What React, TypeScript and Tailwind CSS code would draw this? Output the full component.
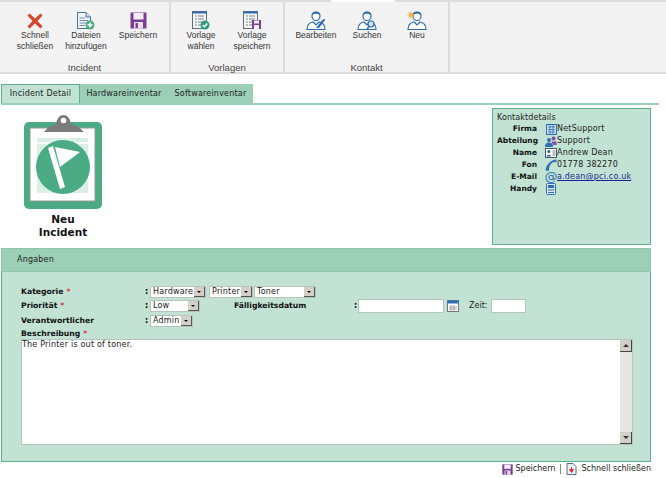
import React from 'react';

const verdana = "font-['DejaVu_Sans',sans-serif]";

function CloseIcon() {
  return (
    <svg width="16" height="16" viewBox="0 0 16 16">
      <path d="M2.500 .5 L8 5.500 L13.500 .5 L15.500 2.500 L10.500 8 L15.500 13.500 L13.500 15.500 L8 10.500 L2.500 15.500 L.5 13.500 L5.500 8 L.5 2.500 Z" fill="#d2492f" />
    </svg>
  );
}

function DocAddIcon() {
  return (
    <svg width="18" height="18" viewBox="0 0 18 18">
      <path d="M.5 .5H9L13.500 5V16.500H.5Z" fill="#f4f6f8" stroke="#48709c" />
      <path d="M9 .5V5H13.500" fill="#cfdcea" stroke="#48709c" />
      <path d="M2.500 6H8M2.500 8.500H11M2.500 11H9M2.500 13.500H8" stroke="#6c8fb5" />
      <circle cx="13" cy="13" r="4.500" fill="#4eaa85" />
      <path d="M13 10.500V15.500M10.500 13H15.500" stroke="#fff" strokeWidth="1.500" />
    </svg>
  );
}

function SaveIcon({ size = 17 }: { size?: number }) {
  return (
    <svg width={size} height={size} viewBox="0 0 17 17">
      <rect x=".5" y=".5" width="16" height="16" fill="#7c3f98" />
      <rect x="3.500" y="1" width="10" height="6.500" fill="#f3eef6" />
      <rect x="4" y="10" width="9" height="6.500" fill="#e9e0ee" />
      <rect x="5.500" y="11" width="2.500" height="5" fill="#7c3f98" />
    </svg>
  );
}

function TemplateIcon({ save }: { save?: boolean }) {
  return (
    <svg width="18" height="19" viewBox="0 0 18 19">
      <rect x=".5" y=".5" width="14" height="17" fill="#f5f6f7" stroke="#5d6b7a" />
      <rect x=".5" y=".5" width="14" height="2" fill="#2f6fb5" />
      <path d="M3 5H5M6 5H12M3 8H5M6 8H12M3 11H5M6 11H10M3 14H5M6 14H9" stroke="#7a8794" />
      {save ? (
        <g>
          <rect x="9" y="9" width="9" height="9" fill="#7c3f98" />
          <rect x="11" y="9.500" width="5" height="3" fill="#f3eef6" />
          <rect x="11" y="14" width="5" height="4" fill="#f3eef6" />
        </g>
      ) : (
        <g>
          <circle cx="13" cy="14" r="4.500" fill="#2f9e78" />
          <path d="M10.800 14L12.500 15.800L15.300 12.500" stroke="#fff" strokeWidth="1.400" fill="none" />
        </g>
      )}
    </svg>
  );
}

function PersonIcon({ variant }: { variant: 'edit' | 'search' | 'new' }) {
  return (
    <svg width="20" height="19" viewBox="0 0 20 19">
      <path d="M10 1C7.500 1 6 2.800 6 5C6 7.500 7.800 9.500 10 9.500C12.200 9.500 14 7.500 14 5C14 2.800 12.500 1 10 1Z" fill="#fff" stroke="#2b6cb0" strokeWidth="1.200" />
      <path d="M6 4.500C7 2.500 12 2 14 4.500C13.500 1.800 12 .8 10 .8C8 .8 6.500 1.800 6 4.500Z" fill="#2b6cb0" />
      <path d="M1 18.500C1 13.500 4 11.500 7 11L10 14L13 11C16 11.500 19 13.500 19 18.500Z" fill="#fff" stroke="#2b6cb0" strokeWidth="1.200" />
      {variant === 'edit' && <path d="M10 17L16 9.500L18.500 7.500L19 9L13 17Z" fill="#2b6cb0" />}
      {variant === 'search' && (
        <g>
          <circle cx="14" cy="13" r="3" fill="#cfe0f2" stroke="#2b6cb0" strokeWidth="1.200" />
          <path d="M12 15.500L10 18" stroke="#2b6cb0" strokeWidth="1.500" />
        </g>
      )}
      {variant === 'new' && (
        <g>
          <circle cx="4" cy="4" r="2.200" fill="#f0b44c" />
          <path d="M4 0V8M0 4H8M1.200 1.200L6.800 6.800M6.800 1.200L1.200 6.800" stroke="#f0b44c" strokeWidth=".8" />
        </g>
      )}
    </svg>
  );
}

function ToolButton({ icon, label, width }: { icon: React.ReactNode; label: React.ReactNode; width: string }) {
  return (
    <div className={`flex flex-col items-center ${width}`}>
      <div className="h-[19px] flex items-center justify-center">{icon}</div>
      <div className="text-center text-[8.500px] leading-[10.500px] text-[#333]">{label}</div>
    </div>
  );
}

function Group({ title, width, pad, children }: { title: string; width: string; pad: string; children: React.ReactNode }) {
  return (
    <div className={`${width} h-full flex flex-col border-r-2 border-[#dcdcdc]`}>
      <div className={`flex-1 flex items-start pt-[9px] ${pad}`}>{children}</div>
      <div className="h-[12px] text-center text-[9.500px] leading-[15px] text-[#444]">{title}</div>
    </div>
  );
}

function Select({ value, width }: { value: string; width: string }) {
  return (
    <div className={`${width} h-[12px] bg-white border border-[#b5c4bd] flex items-center justify-between pl-[2px] pr-0`}>
      <span className="text-[8px] leading-[10px] text-[#222] tracking-[0.2px]">{value}</span>
      <span className="w-[11px] h-[10px] bg-[#d4d0c8] border-r border-b border-[#555] flex items-center justify-center">
        <span className="w-0 h-0 border-l-[2px] border-r-[2px] border-t-[2px] border-l-transparent border-r-transparent border-t-black" />
      </span>
    </div>
  );
}

function FieldLabel({ text, required }: { text: string; required?: boolean }) {
  return (
    <div className="font-bold text-[7.700px] leading-[10px] text-[#111] whitespace-nowrap">
      {text}
      {required && <span className="text-[#d33] ml-[3px]">*</span>}
    </div>
  );
}

function ContactRow({ label, icon, children }: { label: string; icon: React.ReactNode; children: React.ReactNode }) {
  return (
    <div className="h-[12px] flex items-center">
      <span className="w-[40px] text-right font-bold text-[7.500px] leading-[10px] text-[#111]">{label}</span>
      <span className="w-[12px] h-[12px] ml-[8px] flex items-center justify-center shrink-0">{icon}</span>
      <span className="text-[8px] leading-[10px] text-[#222] tracking-[0.2px]">{children}</span>
    </div>
  );
}

function ScrollButton({ up }: { up?: boolean }) {
  return (
    <div className="w-[12px] h-[12px] bg-[#d4d0c8] border-r border-b border-[#444] flex items-center justify-center">
      {up ? (
        <span className="w-0 h-0 border-l-[3px] border-r-[3px] border-b-[3px] border-l-transparent border-r-transparent border-b-[#333]" />
      ) : (
        <span className="w-0 h-0 border-l-[3px] border-r-[3px] border-t-[3px] border-l-transparent border-r-transparent border-t-[#333]" />
      )}
    </div>
  );
}

function Clipboard() {
  return (
    <svg width="79" height="96" viewBox="0 0 79 96">
      <rect x="0" y="8" width="78" height="87" rx="5" fill="#4aab84" />
      <rect x="6" y="14" width="65" height="73" fill="#fff" stroke="#999" />
      <rect x="13" y="24" width="51" height="55" fill="#dcefe6" />
      <path d="M13 29H64" stroke="#fff" strokeWidth="1.500" />
      <circle cx="39" cy="53" r="27" fill="#4aab84" />
      <path d="M24 34L29 32L41 73L36 75Z" fill="#fff" />
      <path d="M31 33L56 38L36 53Z" fill="#fff" />
      <path d="M20 18L25 12.500L32 10C33 4 36 1 39.500 1C43 1 46 4 47 10L54 12.500L60 18Z" fill="#7b7b7b" />
      <circle cx="39.500" cy="6.500" r="2.800" fill="#fff" />
    </svg>
  );
}

export default function App() {
  return (
    <div className="w-[666px] h-[478px] bg-white overflow-hidden font-['Liberation_Sans',sans-serif]">
      <div className="h-[2px] flex">
        <div className="w-[331px] bg-[#dcdcdc]" />
        <div className="w-[64px] bg-white" />
        <div className="flex-1 bg-[#dcdcdc]" />
      </div>
      <div className="h-[72px] bg-[#f3f3f3] border-b-2 border-[#dcdcdc] flex">
        <Group title="Incident" width="w-[171px]" pad="pl-[11px]">
          <ToolButton width="w-[48px]" icon={<CloseIcon />} label={<>Schnell<br />schließen</>} />
          <ToolButton width="w-[54px]" icon={<DocAddIcon />} label={<>Dateien<br />hinzufügen</>} />
          <ToolButton width="w-[50px]" icon={<SaveIcon />} label="Speichern" />
        </Group>
        <Group title="Vorlagen" width="w-[114px]" pad="pl-[6px]">
          <ToolButton width="w-[48px]" icon={<TemplateIcon />} label={<>Vorlage<br />wählen</>} />
          <ToolButton width="w-[54px]" icon={<TemplateIcon save />} label={<>Vorlage<br />speichern</>} />
        </Group>
        <Group title="Kontakt" width="w-[165px]" pad="pl-[3px]">
          <ToolButton width="w-[56px]" icon={<PersonIcon variant="edit" />} label="Bearbeiten" />
          <ToolButton width="w-[46px]" icon={<PersonIcon variant="search" />} label="Suchen" />
          <ToolButton width="w-[54px]" icon={<PersonIcon variant="new" />} label="Neu" />
        </Group>
      </div>

      <div className={`mt-[10px] ml-[1px] w-[658px] h-[21px] flex border-b-2 border-[#9bcfb6] text-[8px] text-[#222] tracking-[0.2px] ${verdana}`}>
        <div className="w-[79px] h-[19px] bg-[#c2e3d4] border border-[#5bb08d] border-b-0 flex items-center justify-center">Incident Detail</div>
        <div className="w-[88px] h-[19px] bg-[#9bcfb6] flex items-center justify-center">Hardwareinventar</div>
        <div className="w-[85px] h-[19px] bg-[#9bcfb6] flex items-center justify-center">Softwareinventar</div>
      </div>

      <div className={`flex justify-between w-[651px] mt-[3px] ${verdana}`}>
        <div className="ml-[23px] flex flex-col items-center w-[80px] pt-[6px]">
          <Clipboard />
          <div className="mt-[3px] text-center font-bold text-[10.500px] leading-[13px] text-[#111]">Neu<br />Incident</div>
        </div>
        <div className="w-[159px] h-[137px] bg-[#c2e3d4] border border-[#5bb08d] pt-[4px] pl-[4px]">
          <div className="text-[8px] leading-[10px] text-[#222] tracking-[0.1px]">Kontaktdetails</div>
          <ContactRow label="Firma" icon={
            <svg width="11" height="11" viewBox="0 0 11 11"><rect x=".5" y=".5" width="10" height="10" fill="#cfe0f2" stroke="#2f6fb5" /><path d="M2 3H9M2 5.500H9M2 8H9M4 1V10M7 1V10" stroke="#2f6fb5" strokeWidth=".8" /></svg>
          }>NetSupport</ContactRow>
          <ContactRow label="Abteilung" icon={
            <svg width="12" height="11" viewBox="0 0 12 11"><circle cx="4" cy="4" r="2" fill="#2f6fb5" /><path d="M0 11C0 7.500 2 6.500 4 6.500C6 6.500 8 7.500 8 11Z" fill="#2f6fb5" /><circle cx="8.500" cy="2.500" r="2" fill="#8a4aa8" /><path d="M6.500 5.500H11.500V9H8Z" fill="#8a4aa8" /></svg>
          }>Support</ContactRow>
          <ContactRow label="Name" icon={
            <svg width="12" height="10" viewBox="0 0 12 10"><rect x=".5" y=".5" width="11" height="9" fill="#fff" stroke="#44586f" /><circle cx="3.800" cy="3.500" r="1.500" fill="#2f5f95" /><path d="M1.500 8.500C1.500 6 6 6 6 8.500Z" fill="#2f5f95" /><path d="M7.500 3H10.500M7.500 5H10.500M7.500 7H10.500" stroke="#44586f" strokeWidth=".8" /></svg>
          }>Andrew Dean</ContactRow>
          <ContactRow label="Fon" icon={
            <svg width="12" height="12" viewBox="0 0 12 12"><path d="M11.500 .5C6 1 1 5.500 .5 11.500L4 11.800C3.800 8 5 5 7.500 3.500L11.800 2.800Z" fill="#2f6fb5" /></svg>
          }>01778 382270</ContactRow>
          <ContactRow label="E-Mail" icon={
            <span className="text-[#2f6fb5] text-[13px] leading-[12px]">@</span>
          }><span className="underline text-[#1f1f8f]">a.dean@pci.co.uk</span></ContactRow>
          <ContactRow label="Handy" icon={
            <svg width="10" height="12" viewBox="0 0 10 12"><rect x=".5" y=".5" width="9" height="11" rx="1" fill="#dbe7f3" stroke="#2f6fb5" /><rect x="2" y="2" width="6" height="3" fill="#2f6fb5" /><path d="M2 7H8M2 9.500H8" stroke="#2f6fb5" /></svg>
          }> </ContactRow>
        </div>
      </div>

      <div className={`ml-[1px] mt-[3px] w-[650px] ${verdana}`}>
        <div className="h-[24px] bg-[#9bcfb6] border border-[#8cc5aa] flex items-center pl-[15px] text-[8px] text-[#222] tracking-[0.2px]">Angaben</div>
        <div className="h-[190px] bg-[#c2e3d4] border border-[#5bb08d] border-t-0 pt-[13px] pl-[19px]">
          <div className="h-[14px] flex items-center">
            <div className="w-[124px]"><FieldLabel text="Kategorie" required /></div>
            <span className="w-[5px] text-[8px] leading-[10px] font-bold">:</span>
            <div className="flex">
              <Select value="Hardware" width="w-[56px]" />
              <div className="w-[3px]" />
              <Select value="Printer" width="w-[44px]" />
              <div className="w-[1px]" />
              <Select value="Toner" width="w-[62px]" />
            </div>
          </div>
          <div className="h-[14px] flex items-center">
            <div className="w-[124px]"><FieldLabel text="Priorität" required /></div>
            <span className="w-[5px] text-[8px] leading-[10px] font-bold">:</span>
            <Select value="Low" width="w-[50px]" />
            <div className="w-[85px] ml-[34px]"><FieldLabel text="Fälligkeitsdatum" /></div>
            <span className="ml-[35px] w-[4px] text-[8px] leading-[10px] font-bold">:</span>
            <div className="w-[86px] h-[14px] bg-white border border-[#b5c4bd]" />
            <svg className="ml-[3px]" width="12" height="12" viewBox="0 0 12 12"><rect x=".5" y=".5" width="11" height="11" fill="#fff" stroke="#777" /><rect x=".5" y=".5" width="11" height="3" fill="#2f6fb5" /><path d="M4 5V11M7 5V11M2 7H10M2 9H10" stroke="#888" strokeWidth=".7" /></svg>
            <span className="ml-[10px] text-[8px] leading-[10px] text-[#222]">Zeit:</span>
            <div className="ml-[4px] w-[35px] h-[14px] bg-white border border-[#b5c4bd]" />
          </div>
          <div className="h-[14px] mt-[1px] flex items-center">
            <div className="w-[124px]"><FieldLabel text="Verantwortlicher" /></div>
            <span className="w-[5px] text-[8px] leading-[10px] font-bold">:</span>
            <Select value="Admin" width="w-[43px]" />
          </div>
          <div className="h-[11px] flex items-center"><FieldLabel text="Beschreibung" required /></div>
          <div className="w-[612px] h-[106px] bg-white border border-[#b5c4bd] flex justify-between">
            <div className="text-[8px] leading-[10px] text-[#222] tracking-[0.2px]">The Printer is out of toner.</div>
            <div className="w-[12px] h-full flex flex-col justify-between bg-[#e6e6e6] shrink-0">
              <ScrollButton up />
              <ScrollButton />
            </div>
          </div>
        </div>
      </div>

      <div className={`w-[651px] mt-[1px] flex justify-end items-center text-[8px] text-[#222] ${verdana}`}>
        <SaveIcon size={11} />
        <span className="ml-[3px]">Speichern</span>
        <span className="mx-[5px] w-px h-[10px] bg-[#888]" />
        <svg width="11" height="12" viewBox="0 0 11 12"><path d="M1 .5H7L10 3.500V11.500H1Z" fill="#eef2f7" stroke="#4a6f9c" /><path d="M5.500 4V8M3.500 6.500L5.500 9.500L7.500 6.500Z" fill="#d33" stroke="#d33" /></svg>
        <span className="ml-[4px]">Schnell schließen</span>
      </div>
    </div>
  );
}
